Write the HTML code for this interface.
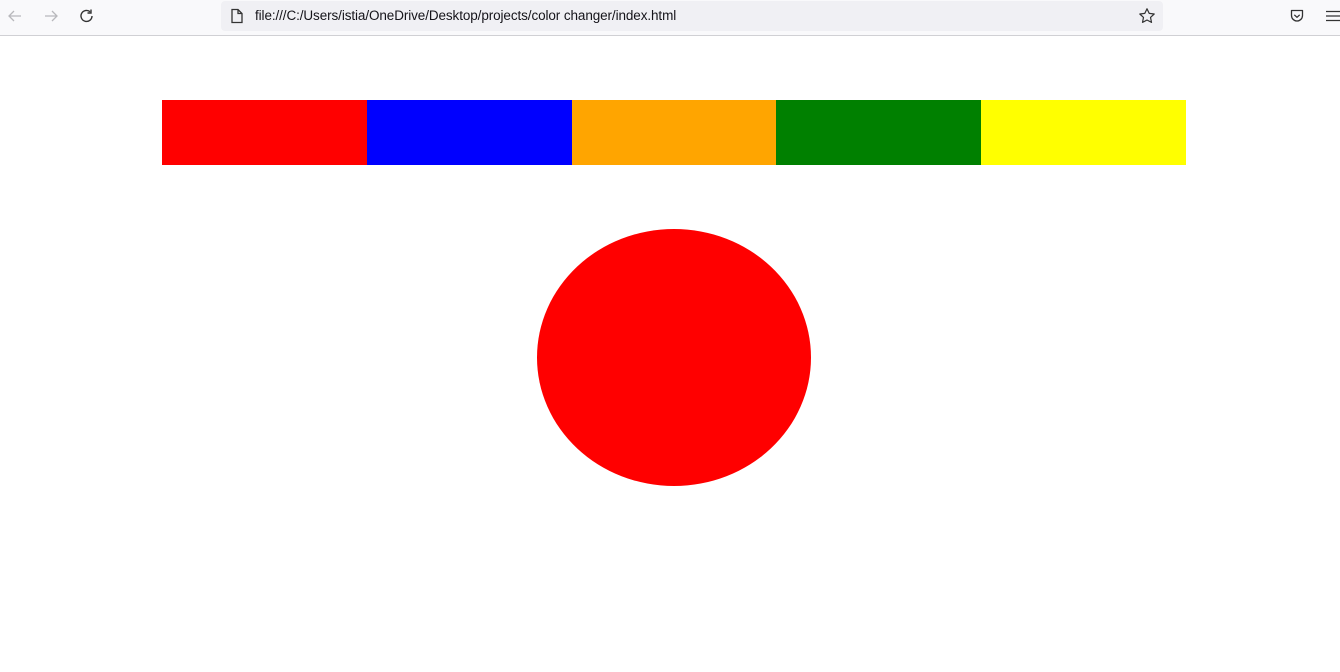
<!DOCTYPE html>
<html><head><meta charset="utf-8"><style>
html,body{margin:0;padding:0;width:1340px;height:672px;background:#fff;overflow:hidden;font-family:"Liberation Sans",sans-serif}
.tb{position:absolute;left:0;top:0;width:1340px;height:35px;background:#f9f9fb;border-bottom:1px solid #d0d0d4}
.url{position:absolute;left:221px;top:1px;width:942px;height:30px;background:#f0f0f4;border-radius:4px}
.url span{position:absolute;left:34px;top:7px;font-size:13.5px;color:#15141a;letter-spacing:-0.1px}
svg{position:absolute}
.s{position:absolute;top:100px;height:65px}
.c{position:absolute;left:537px;top:229px;width:274px;height:257px;border-radius:50%;background:#f00}
</style></head><body>
<div class="tb">
<svg style="left:6px;top:7px" width="18" height="18" viewBox="0 0 18 18"><path d="M15 9H3M8 4L3 9l5 5" fill="none" stroke="#b8b8bc" stroke-width="1.3"/></svg>
<svg style="left:42px;top:7px" width="18" height="18" viewBox="0 0 18 18"><path d="M3 9h12M10 4l5 5-5 5" fill="none" stroke="#b8b8bc" stroke-width="1.3"/></svg>
<svg style="left:78px;top:7px" width="18" height="18" viewBox="0 0 18 18"><path d="M14 9a5.5 5.5 0 1 1-2-4.3M13 2.5v3.5h-3.5" fill="none" stroke="#333" stroke-width="1.4"/></svg>
<div class="url">
<svg style="left:9px;top:7px" width="14" height="16" viewBox="0 0 14 16"><path d="M2 1.5h6l4 4v9H2z M8 1.5v4h4" fill="none" stroke="#333" stroke-width="1.3"/></svg>
<span>file:///C:/Users/istia/OneDrive/Desktop/projects/color changer/index.html</span>
<svg style="left:917px;top:6px" width="18" height="18" viewBox="0 0 18 18"><path d="M9 1.8l2.2 4.6 5 .6-3.7 3.4 1 5L9 13l-4.5 2.4 1-5L1.8 7l5-.6z" fill="none" stroke="#333" stroke-width="1.2" stroke-linejoin="round"/></svg>
</div>
<svg style="left:1289px;top:8px" width="16" height="16" viewBox="0 0 16 16"><path d="M2.5 2.5h11v5a5.5 5.5 0 0 1-11 0z M5.3 6.8L8 9.3l2.7-2.5" fill="none" stroke="#333" stroke-width="1.3" stroke-linejoin="round"/></svg>
<svg style="left:1325px;top:8px" width="15" height="16" viewBox="0 0 15 16"><path d="M1 3.5h14M1 8h14M1 12.5h14" stroke="#333" stroke-width="1.3"/></svg>
</div>
<div class="s" style="left:162px;width:205px;background:#f00"></div>
<div class="s" style="left:367px;width:205px;background:#00f"></div>
<div class="s" style="left:572px;width:204px;background:#ffa500"></div>
<div class="s" style="left:776px;width:205px;background:#008000"></div>
<div class="s" style="left:981px;width:205px;background:#ff0"></div>
<div class="c"></div>
</body></html>
